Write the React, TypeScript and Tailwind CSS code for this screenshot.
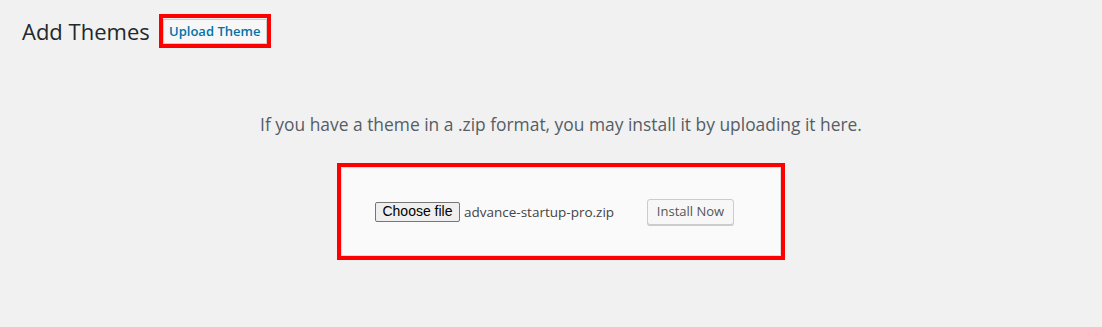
import React from "react";

export default function App() {
  return (
    <div
      className="min-h-[327px] w-full bg-[#f1f1f1] text-[#444]"
      style={{ fontFamily: '"Open Sans", "Noto Sans", sans-serif' }}
    >
      <div className="pl-[22px] pt-[14px]">
        <div className="flex items-center">
          <h1 className="text-[22px] font-normal leading-[30px] text-[#23282d]">
            Add Themes
          </h1>
          <div className="ml-[9px] border-4 border-[#ff0000]">
            <button className="h-[25px] w-[104px] border border-[#cccccc] bg-[#f7f7f7] text-[13px] font-semibold text-[#0073aa]">
              Upload Theme
            </button>
          </div>
        </div>
      </div>

      <div className="pl-[20px]">
        <p className="mt-[64px] text-center text-[17.4px] leading-[24px] text-[#555d66]">
          If you have a theme in a .zip format, you may install it by uploading it here.
        </p>
        <div className="mt-[27px] flex justify-center">
          <div className="h-[97px] w-[448px] border-4 border-[#ff0000]">
            <div className="flex h-full w-full items-center border border-[#dddddd] bg-[#fafafa] pl-[33px]">
              <div className="flex w-[272px] items-center">
                <span
                  className="flex h-[20px] w-[85px] items-center justify-center rounded-[2px] border border-[#767676] bg-[#efefef] text-[14px] text-black"
                  style={{ fontFamily: '"Liberation Sans", Arial, sans-serif' }}
                >
                  Choose file
                </span>
                <span className="ml-[4px] text-[13.5px] text-[#444]">
                  advance-startup-pro.zip
                </span>
              </div>
              <button className="h-[26px] w-[87px] rounded-[3px] border border-[#cccccc] bg-[#f7f7f7] text-[13px] text-[#555] shadow-[0_1px_0_#cccccc]">
                Install Now
              </button>
            </div>
          </div>
        </div>
      </div>
    </div>
  );
}
